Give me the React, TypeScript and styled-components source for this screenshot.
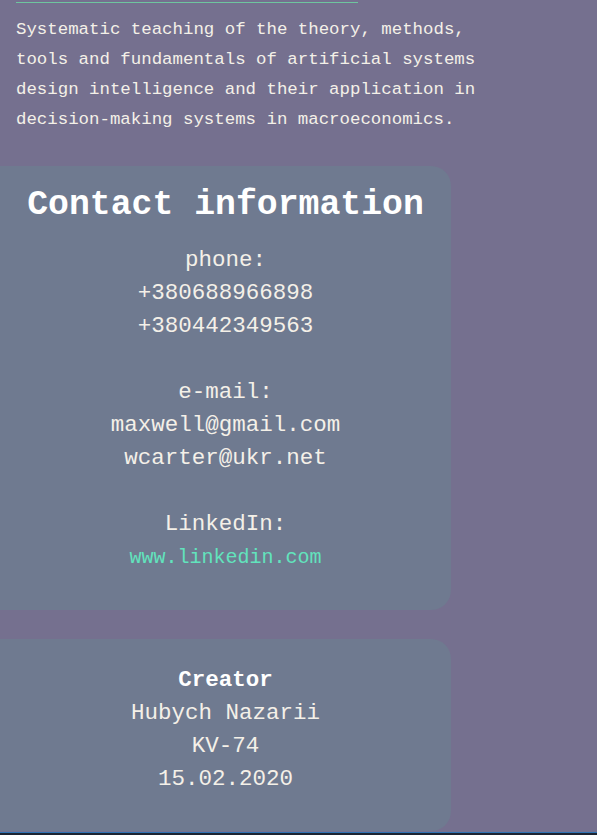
import React from "react";
import styled, { createGlobalStyle } from "styled-components";

const Global = createGlobalStyle`
  html, body { margin: 0; padding: 0; }
  body {
    background: #75708f;
    font-family: "Liberation Mono", "Courier New", monospace;
    color: #f4f0e8;
    overflow: hidden;
  }
`;

const Page = styled.div`
  display: flex;
  flex-direction: column;
  min-height: 835px;
`;

const Rule = styled.hr`
  margin: 2px 0 0 16px;
  width: 342px;
  height: 1px;
  border: none;
  background: #6ec59f;
`;

const Intro = styled.p`
  margin: 12px 0 0 16px;
  width: 490px;
  font-size: 17.4px;
  line-height: 30px;
`;

const Card = styled.section<{ $top: number; $padTop: number; $padBottom: number }>`
  margin-top: ${(p) => p.$top}px;
  width: 451px;
  box-sizing: border-box;
  background: #6f7a90;
  border-radius: 0 20px 20px 0;
  padding: ${(p) => p.$padTop}px 0 ${(p) => p.$padBottom}px;
  display: flex;
  flex-direction: column;
  align-items: center;
  text-align: center;
`;

const Heading = styled.h2`
  margin: 0 0 18px;
  font-size: 34.8px;
  line-height: 42px;
  font-weight: bold;
  color: #ffffff;
`;

const Line = styled.div<{ $bold?: boolean }>`
  font-size: 22.5px;
  line-height: 33px;
  font-weight: ${(p) => (p.$bold ? "bold" : "normal")};
  color: ${(p) => (p.$bold ? "#ffffff" : "#f4f0e8")};
  min-height: 33px;
`;

const Link = styled.a`
  font-size: 20px;
  line-height: 33px;
  color: #62e3bd;
  text-decoration: none;
`;

const Footer = styled.div`
  margin-top: auto;
  height: 2px;
  border-top: 1px solid #2f72b3;
  background: #1d2431;
`;

export default function App() {
  return (
    <>
      <Global />
      <Page>
        <Rule />
        <Intro>
          Systematic teaching of the theory, methods, tools and fundamentals of
          artificial systems design intelligence and their application in
          decision-making systems in macroeconomics.
        </Intro>
        <Card $top={31} $padTop={18} $padBottom={36}>
          <Heading>Contact information</Heading>
          <Line>phone:</Line>
          <Line>+380688966898</Line>
          <Line>+380442349563</Line>
          <Line />
          <Line>e-mail:</Line>
          <Line>maxwell@gmail.com</Line>
          <Line>wcarter@ukr.net</Line>
          <Line />
          <Line>LinkedIn:</Line>
          <Link href="#">www.linkedin.com</Link>
        </Card>
        <Card $top={29} $padTop={25} $padBottom={35}>
          <Line $bold>Creator</Line>
          <Line>Hubych Nazarii</Line>
          <Line>KV-74</Line>
          <Line>15.02.2020</Line>
        </Card>
        <Footer />
      </Page>
    </>
  );
}
